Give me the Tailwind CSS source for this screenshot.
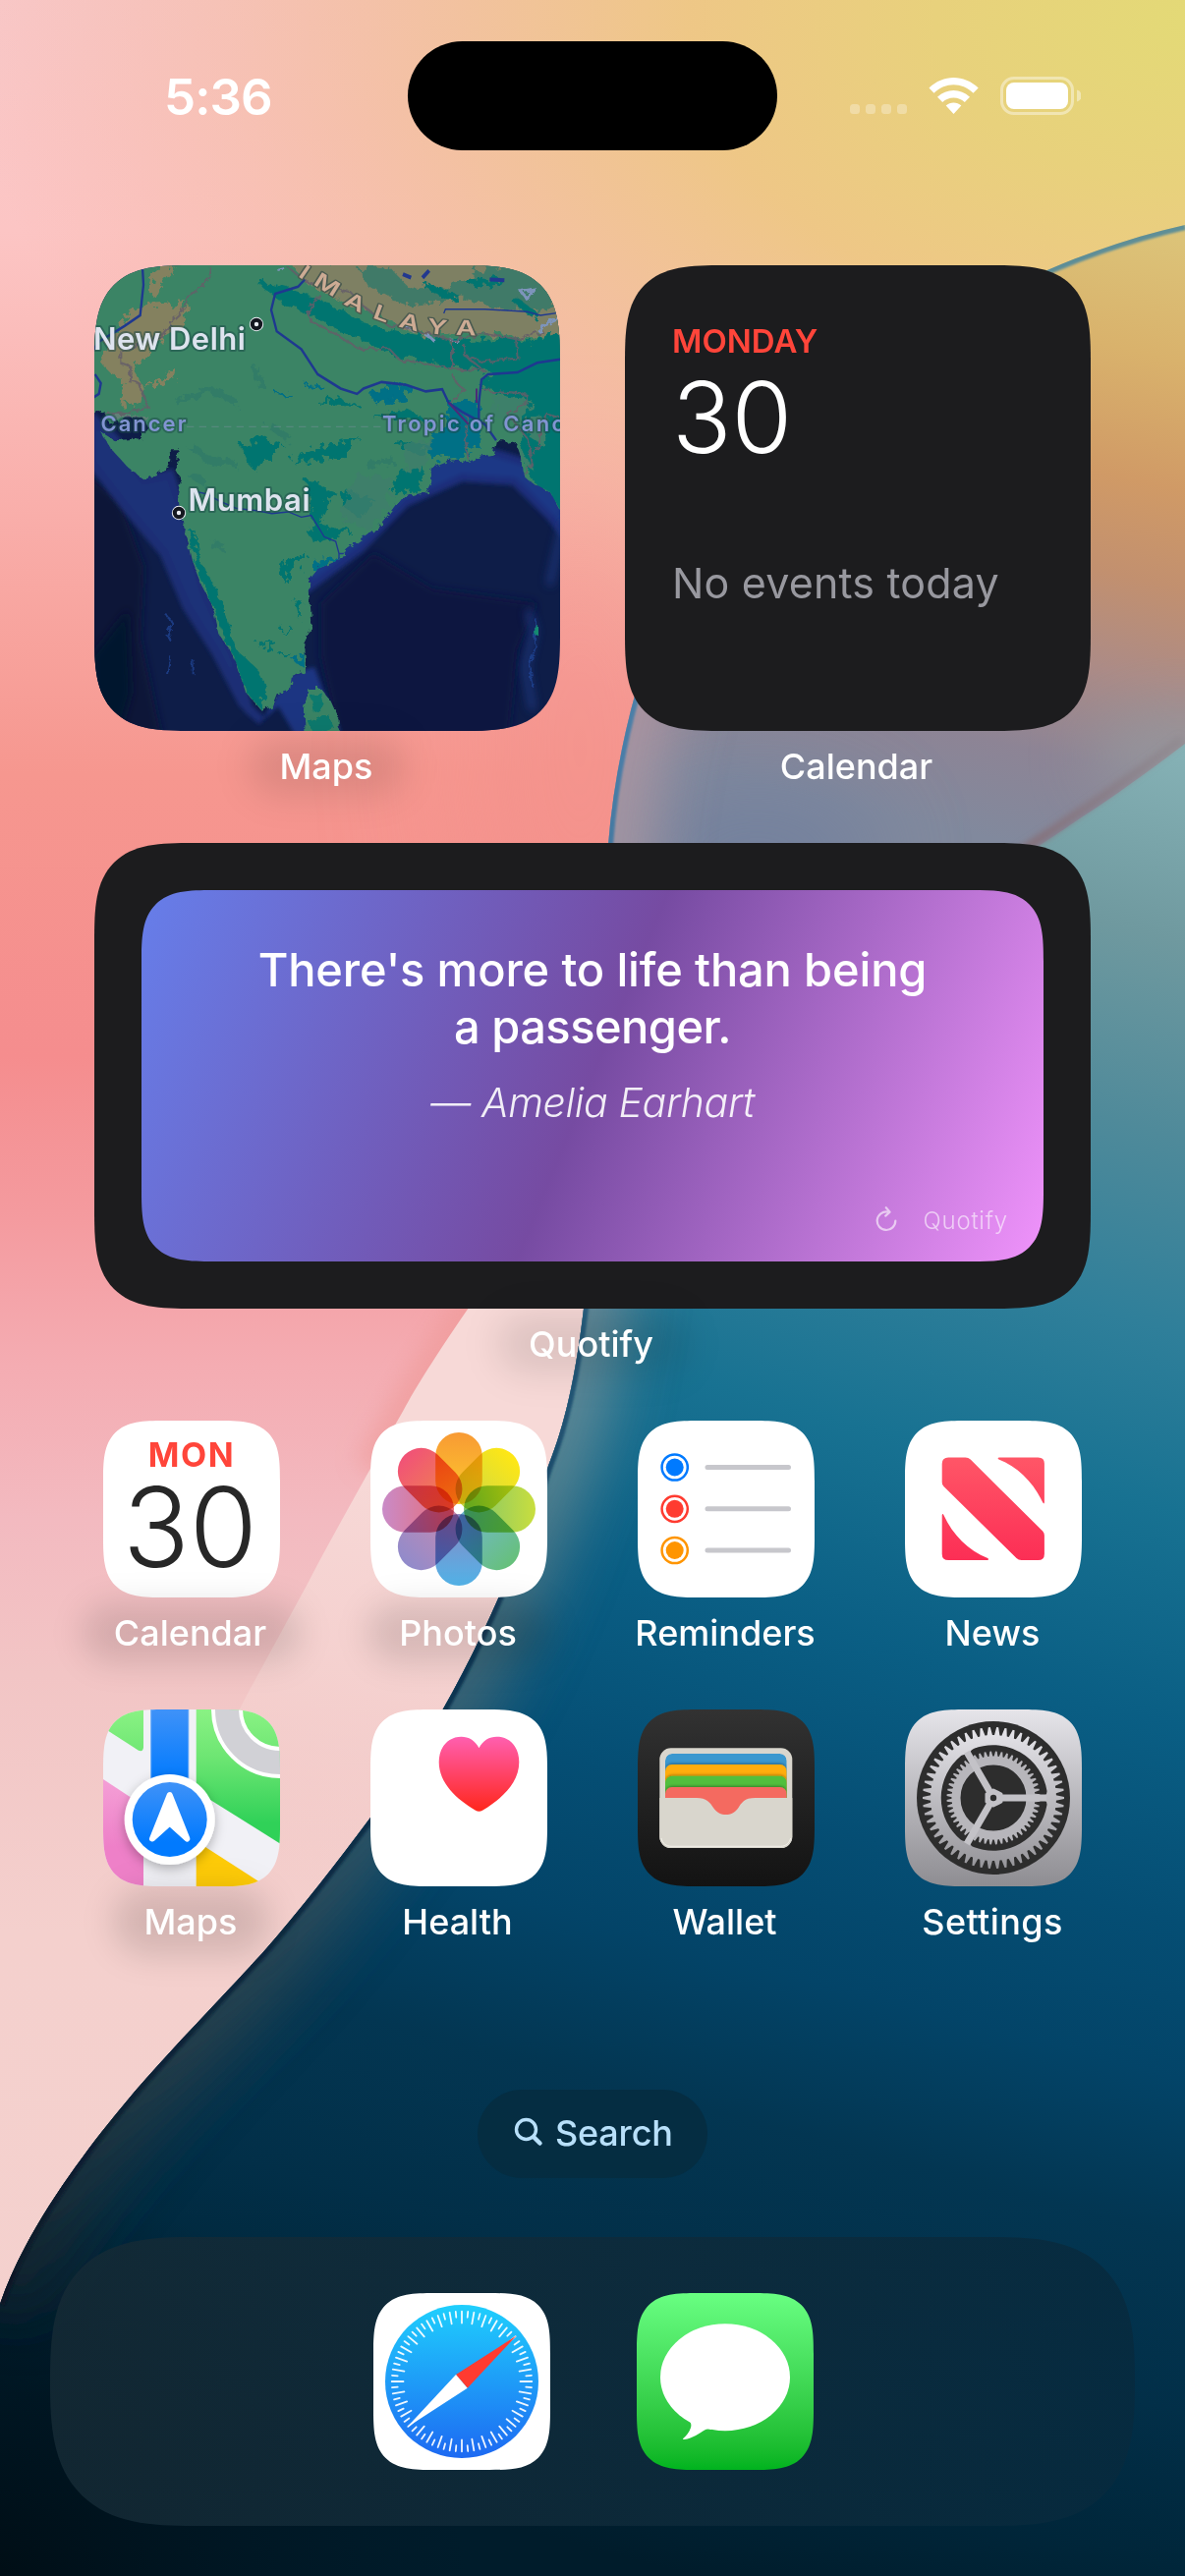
<!DOCTYPE html>
<html lang="en">
<head>
<meta charset="utf-8">
<title>Home Screen</title>
<script src="https://cdn.jsdelivr.net/npm/@tailwindcss/browser@4"></script>
</head>
<body class="bg-[#f4d1ce]">
<div class="relative h-[2622px] w-[1206px] overflow-hidden font-['Inter',sans-serif] text-white">

  <!-- Wallpaper -->
  <svg class="absolute inset-0 h-full w-full" viewBox="0 0 1206 2622">
    <defs>
      <linearGradient id="wBase" x1="0" y1="0" x2="0" y2="2622" gradientUnits="userSpaceOnUse">
        <stop offset="0" stop-color="#f8c8c8"/><stop offset=".09" stop-color="#fcc5c4"/><stop offset=".2" stop-color="#f9aeaa"/>
        <stop offset=".3" stop-color="#f6978f"/><stop offset=".41" stop-color="#f58d8e"/><stop offset=".47" stop-color="#f49a9e"/><stop offset=".53" stop-color="#f4acb2"/>
        <stop offset=".59" stop-color="#f3bac0"/><stop offset=".65" stop-color="#f2c5c5"/><stop offset=".75" stop-color="#f4d0cd"/><stop offset="1" stop-color="#f4d1ce"/>
      </linearGradient>
      <radialGradient id="wSun" cx="0" cy="0" r="1" gradientUnits="userSpaceOnUse" gradientTransform="matrix(1260 0 0 780 1230 20)">
        <stop offset="0" stop-color="#e3da76"/><stop offset=".22" stop-color="#e8d17c"/><stop offset=".42" stop-color="#eec785" stop-opacity=".98"/>
        <stop offset=".6" stop-color="#f1c197" stop-opacity=".85"/><stop offset=".8" stop-color="#f3b99c" stop-opacity=".4"/><stop offset="1" stop-color="#f5b0a0" stop-opacity="0"/>
      </radialGradient>
      <linearGradient id="wUpper" x1="1180" y1="230" x2="1040" y2="860" gradientUnits="userSpaceOnUse">
        <stop offset="0" stop-color="#dcc479"/><stop offset=".2" stop-color="#d9b26c"/><stop offset=".4" stop-color="#d09a66"/><stop offset=".55" stop-color="#c2906f"/>
        <stop offset=".7" stop-color="#ac8b86"/><stop offset=".85" stop-color="#8d8495"/><stop offset="1" stop-color="#81899d"/>
      </linearGradient>
      <linearGradient id="wDeep" x1="1206" y1="760" x2="706" y2="2622" gradientUnits="userSpaceOnUse">
        <stop offset="0" stop-color="#86b2b6"/><stop offset=".1" stop-color="#6f999f"/><stop offset=".2" stop-color="#4f8a9a"/><stop offset=".3" stop-color="#2f7f9a"/>
        <stop offset=".39" stop-color="#187292"/><stop offset=".5" stop-color="#0a5e84"/><stop offset=".6" stop-color="#054e74"/><stop offset=".68" stop-color="#034468"/>
        <stop offset=".76" stop-color="#033652"/><stop offset=".85" stop-color="#022f48"/><stop offset=".93" stop-color="#00263a"/><stop offset="1" stop-color="#001c2b"/>
      </linearGradient>
      <radialGradient id="wNight" cx="0" cy="0" r="1" gradientUnits="userSpaceOnUse" gradientTransform="matrix(520 0 0 420 -40 2640)">
        <stop offset="0" stop-color="#000b11" stop-opacity=".95"/><stop offset=".4" stop-color="#000f18" stop-opacity=".6"/><stop offset="1" stop-color="#001420" stop-opacity="0"/>
      </radialGradient>
      <linearGradient id="wEdge" x1="0" y1="229" x2="0" y2="2350" gradientUnits="userSpaceOnUse">
        <stop offset="0" stop-color="#5f8f96"/><stop offset=".25" stop-color="#4a7ea8"/><stop offset=".5" stop-color="#2c6485"/><stop offset=".7" stop-color="#0f3552"/><stop offset="1" stop-color="#081826"/>
      </linearGradient>
      <linearGradient id="wHaze" x1="0" y1="600" x2="0" y2="2350" gradientUnits="userSpaceOnUse">
        <stop offset="0" stop-color="#bd97a2"/><stop offset=".25" stop-color="#a39aa5"/><stop offset=".5" stop-color="#6d8e96"/><stop offset=".7" stop-color="#3c5a66"/><stop offset=".85" stop-color="#304149"/><stop offset="1" stop-color="#14222a"/>
      </linearGradient>
      <linearGradient id="wSeam" x1="1206" y1="757" x2="1060" y2="860" gradientUnits="userSpaceOnUse">
        <stop offset="0" stop-color="#8b8288" stop-opacity=".45"/><stop offset="1" stop-color="#85727c"/>
      </linearGradient>
      <linearGradient id="wRibbon" x1="330" y1="1480" x2="240" y2="1900" gradientUnits="userSpaceOnUse">
        <stop offset="0" stop-color="#f7d9d7"/><stop offset=".5" stop-color="#f5d2d0" stop-opacity=".9"/><stop offset="1" stop-color="#f4d1ce" stop-opacity="0"/>
      </linearGradient>
      <clipPath id="wSheet"><path d="M1206 229C1000 275 760 430 680 610C650 680 626 770 619 860C611 1010 611 1190 594 1332C586 1400 575 1450 558 1492C542 1540 526 1585 507 1627C475 1700 430 1785 377 1850C345 1893 305 1945 267 1988C210 2050 165 2095 127 2141C90 2185 25 2270 0 2345V2622H1206Z"/></clipPath>
      <clipPath id="wLower"><path d="M1206 757C1170 784 1135 810 1102 831C1060 860 1000 900 940 920L560 1100H0V2622H1206Z"/></clipPath>
      <clipPath id="wOutside"><path d="M0 0H1206V229C1000 275 760 430 680 610C650 680 626 770 619 860C611 1010 611 1190 594 1332C586 1400 575 1450 558 1492C542 1540 526 1585 507 1627C475 1700 430 1785 377 1850L0 2345Z"/></clipPath>
      <filter id="b12" x="-50%" y="-50%" width="200%" height="200%"><feGaussianBlur stdDeviation="12"/></filter>
      <filter id="b30" x="-50%" y="-50%" width="200%" height="200%"><feGaussianBlur stdDeviation="32"/></filter>
      <filter id="b45" x="-100%" y="-150%" width="300%" height="400%"><feGaussianBlur stdDeviation="45"/></filter>
      <filter id="b70" x="-100%" y="-100%" width="300%" height="300%"><feGaussianBlur stdDeviation="70"/></filter>
      <filter id="b1" x="-20%" y="-20%" width="140%" height="140%"><feGaussianBlur stdDeviation="1.2"/></filter>
      <filter id="b3" x="-20%" y="-20%" width="140%" height="140%"><feGaussianBlur stdDeviation="3"/></filter>
    </defs>
    <rect width="1206" height="2622" fill="url(#wBase)"/>
    <ellipse cx="590" cy="760" rx="120" ry="260" fill="#f3908a" opacity=".5" filter="url(#b70)"/>
    <rect width="1206" height="1000" fill="url(#wSun)"/>
    <g clip-path="url(#wOutside)">
      <path d="M520 1270C470 1340 440 1385 418 1422C404 1446 390 1470 376 1495" fill="none" stroke="#ef9a98" stroke-width="30" opacity=".7" filter="url(#b12)"/>
      <path d="M520 1270C470 1340 440 1385 418 1422C400 1455 345 1550 313 1612L253 1722L150 1920H700V1270Z" fill="url(#wRibbon)"/>
    </g>
    <g clip-path="url(#wSheet)">
      <rect width="1206" height="2622" fill="url(#wUpper)"/>
      <ellipse cx="770" cy="870" rx="130" ry="70" fill="#6f7f9e" opacity=".75" filter="url(#b45)"/>
      <ellipse cx="1200" cy="770" rx="90" ry="50" fill="#949ba0" opacity=".7" filter="url(#b30)"/>
      <g clip-path="url(#wLower)">
        <rect width="1206" height="2622" fill="url(#wDeep)"/>
        <rect y="2100" width="700" height="522" fill="url(#wNight)"/>
      </g>
      <path d="M1206 757C1170 784 1135 810 1102 831C1085 843 1060 860 1040 872" fill="none" stroke="url(#wSeam)" stroke-width="9" filter="url(#b3)" transform="translate(-3 -5)"/>
      <path d="M680 610C650 680 626 770 619 860C611 1010 611 1190 594 1332C586 1400 575 1450 558 1492C542 1540 526 1585 507 1627C475 1700 430 1785 377 1850C345 1893 305 1945 267 1988C210 2050 165 2095 127 2141C90 2185 25 2270 0 2345" fill="none" stroke="url(#wHaze)" stroke-width="80" opacity=".85" filter="url(#b30)"/>
      <path d="M1206 229C1000 275 760 430 680 610C650 680 626 770 619 860C611 1010 611 1190 594 1332C586 1400 575 1450 558 1492C542 1540 526 1585 507 1627C475 1700 430 1785 377 1850C345 1893 305 1945 267 1988C210 2050 165 2095 127 2141C90 2185 25 2270 0 2345" fill="none" stroke="url(#wEdge)" stroke-width="10" filter="url(#b1)"/>
    </g>
  </svg>

  <div class="relative flex flex-col">
    <!-- Status bar -->
    <header class="grid h-[194px] grid-cols-[415px_376px_415px] items-center">
      <div class="pt-[3px] pl-[167px] text-[51px] leading-[60px] font-semibold tracking-[-0.9px]">5:36</div>
      <div class="h-[111px] rounded-full bg-black"></div>
      <div class="flex items-center justify-end pr-[106px]">
        <svg class="h-[40px] w-[236px]" viewBox="864 77 236 40" fill="#fff">
          <g opacity=".3"><rect x="865" y="106" width="10" height="10" rx="3.5"/><rect x="881" y="106" width="10" height="10" rx="3.5"/><rect x="897" y="106" width="10" height="10" rx="3.5"/><rect x="913" y="106" width="10" height="10" rx="3.5"/></g>
          <path d="M945.5 89.500C960 75.500 981 75.500 995.700 89.500L990.500 94.700C978.500 83.500 962.500 83.500 950.500 94.700Z"/>
          <path d="M954 98.800C963.500 89.700 977.500 89.700 987 98.800L981.800 104C975.500 98 965.500 98 959.200 104Z"/>
          <path d="M962.700 107.500C967 103.500 974 103.500 978.300 107.500L970.500 116Z"/>
          <g opacity=".42"><rect x="1019.500" y="79.500" width="72" height="36" rx="12.500" fill="none" stroke="#fff" stroke-width="3"/><path d="M1096 91.500a6.200 6.200 0 0 1 0 12z"/></g>
          <rect x="1024" y="84" width="63" height="27" rx="8"/>
        </svg>
      </div>
    </header>

    <main class="flex flex-col gap-[56px] pt-[76px]">
      <div class="flex justify-between px-[96px]">
        <!-- Maps widget -->
        <section class="flex flex-col items-center gap-[14px]">
          <div class="size-[474px] overflow-hidden rounded-[101px] [corner-shape:superellipse(1.65)]">
            <svg class="block size-full" viewBox="0 0 474 474">
              <defs>
                <filter id="rough" x="-5%" y="-5%" width="110%" height="110%"><feTurbulence type="fractalNoise" baseFrequency=".05" numOctaves="3" seed="4"/><feDisplacementMap in="SourceGraphic" scale="22"/></filter>
                <filter id="rough2" x="-5%" y="-5%" width="110%" height="110%"><feTurbulence type="fractalNoise" baseFrequency=".04" numOctaves="3" seed="9"/><feDisplacementMap in="SourceGraphic" scale="50"/></filter>
                <filter id="mb" x="-60%" y="-30%" width="220%" height="160%"><feGaussianBlur stdDeviation="13"/></filter>
                <filter id="mb6" x="-60%" y="-30%" width="220%" height="160%"><feGaussianBlur stdDeviation="6"/></filter>
                <path id="land" d="M-60 0H1560V780L1470 740L1440 690L1370 655L1355 630L1350 590L1335 550L1310 555L1300 545H1275L1265 585L1230 590L1190 605L1140 600L1072 625L1078 660L1060 690L985 705L940 760L900 800L820 850L795 880L730 905L702 940L712 1060L688 1105L690 1190L650 1210L645 1245L605 1255L590 1290L560 1303L510 1250L475 1150L430 1090L410 1010L375 950L345 880L320 780L305 700L315 660L298 630L305 570H278L280 600L265 630L200 655L150 620L100 570L65 520L110 545L190 540L215 510L195 480L130 480L95 500L75 460L48 468L-60 480Z"/>
                <path id="isle" d="M700 1240H740L770 1275L797 1330V1400H692L690 1300Z"/>
                <clipPath id="landClip"><use href="#land"/></clipPath>
              </defs>
              <rect width="474" height="474" fill="#0e1d48"/>
              <g transform="scale(.33333 .36364) translate(-48 -55)">
                <path d="M740 1000L900 860L1080 960L1400 1000L1340 1130L1310 1400H800L740 1150Z" fill="#0b1341" filter="url(#mb)"/>
                <path d="M30 640L130 720L200 900L190 1100L260 1400H20Z" fill="#0a1438" filter="url(#mb)"/>
                <path d="M40 1150L150 1020L160 1250L120 1380H40Z" fill="#02142e" filter="url(#mb)"/>
                <path d="M40 480L110 540L200 655L280 640L330 780L380 960L480 1160L520 1300L560 1330L500 1280L420 1140L330 1010L260 860L150 740L40 610Z" fill="#1c3078" stroke="#1b2e74" stroke-width="26" filter="url(#mb6)"/>
                <path d="M700 960L860 850L1000 720L1170 650L1330 660L1440 760L1490 820L1480 640L1200 560L960 640L700 860Z" fill="#1f3786" stroke="#1b2f7a" stroke-width="22" filter="url(#mb6)"/>
                <path d="M640 1200L720 1180L745 1240L800 1360L680 1400L610 1290L560 1330Z" fill="#1f3582" filter="url(#mb6)"/>
                <path d="M1375 1030L1390 1080L1365 1180L1385 1290M1480 780L1440 940" fill="none" stroke="#1b3478" stroke-width="26" stroke-linecap="round" opacity=".8" filter="url(#mb)"/>
                <path d="M1393 1040L1396 1120L1375 1180L1390 1240M265 1030L290 1060L270 1090L285 1110M280 1150L270 1200M350 1160V1200" fill="none" stroke="#24489a" stroke-width="6" opacity=".7" filter="url(#rough)"/>
                <g filter="url(#rough)"><use href="#land" fill="#3b8465"/><use href="#isle" fill="#3b8465"/><path d="M1393 1062h8v28h-8z" fill="#138a70"/><path d="M710 1260L740 1250L750 1290L720 1310ZM700 1330L760 1310L780 1350L720 1370Z" fill="#0a7a6e"/></g>
                <g clip-path="url(#landClip)">
                  <g filter="url(#rough2)">
                    <path d="M230 60H300L250 110L240 150L215 130ZM190 170L330 160L320 220L250 260L210 300L160 340L200 400L290 340L300 370L200 400L190 440L130 450L140 380L90 350L60 320L130 210Z" fill="#84815f"/>
                    <path d="M640 40H1480V240L1380 260L1180 240L1040 250L930 200L820 160L700 110Z" fill="#7e8064"/>
                    <path d="M850 60H950L1000 110L1120 120L1250 60L1380 70L1450 120L1440 180L1300 180L1180 150L1000 170L880 110Z" fill="#417a68"/>
                    <path d="M540 100L640 120L740 150L800 180L880 220L980 240L1140 270L1300 260L1380 270L1490 230V760L1380 650L1350 560L1370 440L1230 400L1260 350L1130 340L980 310L850 260L740 210L620 160Z" fill="#04756f"/>
                    <path d="M1180 90L1230 110L1290 100M1160 150L1060 110M1330 150L1400 200" fill="none" stroke="#04756f" stroke-width="20"/>
                    <path d="M1130 440L1220 440L1230 560L1150 590L1080 600L1060 560L1120 500Z" fill="#056f86"/>
                    <path d="M890 410L1010 390L990 430L910 440ZM690 390L750 400M600 410L650 420" fill="#056f86" stroke="#056f86" stroke-width="8"/>
                    <path d="M1270 420L1380 430L1350 500L1270 480ZM1380 480L1430 480L1420 560L1370 530ZM1300 560L1350 570L1400 640Z" fill="#3d806a"/>
                    <path d="M500 560L560 540L620 560L570 600L530 620ZM650 600L760 560L850 540L800 590L720 600ZM700 660L780 690L740 770L700 800L720 830L830 800L720 780ZM800 690L900 710L860 760L810 730ZM960 550L1060 560L1050 590ZM980 640L1050 620L1040 680L960 690ZM730 440L800 430L860 450M900 480L1000 460L1080 500" fill="#04756f" stroke="#04756f" stroke-width="6"/>
                    <path d="M350 790L370 880L420 960L450 1040L480 1130L540 1180L570 1230L560 1300L510 1250L470 1150L410 1010L370 930L340 830Z" fill="#04756f"/>
                    <path d="M620 890L660 880L700 870L660 900L630 940ZM660 990L680 1000L670 1030ZM620 1080L650 1070M550 1120L600 1110M610 1140L640 1140" fill="#04756f" stroke="#04756f" stroke-width="8"/>
                    <path d="M720 880L800 870L780 890L720 920ZM650 1160L700 1140V1190Z" fill="#056f86"/>
                    <path d="M340 560L400 600L480 610M300 440L400 400L480 440M540 340L560 400M580 500L640 540M340 640L380 660M880 620L960 600M400 830L440 840" fill="none" stroke="#2f7a68" stroke-width="20" opacity=".8"/>
                    <path d="M990 560L1080 540L1060 610L1000 640ZM850 640L960 650L940 740L880 790L800 770Z" fill="#3e7d6b" opacity=".8"/>
                  </g>
                  <path d="M100 470L215 480L190 510L110 505Z" fill="#72807e" opacity=".7" filter="url(#rough)"/>
                  <path d="M1352 128L1388 122L1368 148ZM1402 240L1425 222L1462 205M990 225L1030 240M1060 250L1085 265M1135 265H1160M610 70L630 65" fill="none" stroke="#7d94bb" stroke-width="9" filter="url(#rough)"/>
                  <path d="M990 80L1015 90M1050 90L1070 70M1255 95L1300 97" stroke="#22388f" stroke-width="11"/>
                  <g fill="none" stroke="#655f69" stroke-width="6" opacity=".85" filter="url(#rough)">
                    <path d="M405 60L400 90L370 120L335 140L315 190L285 215L250 255L130 295V330L160 340L155 380L185 385L210 450L150 470L60 470"/>
                    <path d="M640 60L690 100L730 110L830 130L870 170L940 220L1040 240L1140 265L1240 245L1340 262L1420 240"/>
                    <path d="M740 140L705 170V210L770 240L850 285L950 290L980 320L1060 330L1140 345V270M1140 345L1240 350L1180 310L1175 275M1180 310L1240 325L1340 315L1335 260"/>
                    <path d="M1140 360L1160 390L1180 405L1130 440L1190 480L1180 540L1190 600M1235 405L1340 412L1370 420L1360 450L1310 470L1370 540L1385 610L1360 650M1385 580L1410 560V500L1430 470L1470 480"/>
                  </g>
                  <g fill="none" stroke="#1e3890" stroke-width="7">
                    <path d="M195 60L198 110L188 195L140 225L60 270L40 300M50 360L68 385L62 415L45 425"/>
                    <path d="M690 95L670 115L600 135L588 180L605 240L680 290L730 360L800 400L850 415L870 400L925 382L1000 390L1060 408L1110 402L1130 440L1170 465L1240 500L1275 545"/>
                    <path d="M1470 318L1400 328L1340 355L1250 360L1230 375L1222 440V490"/>
                    <path d="M1115 190L1120 178L1240 178L1370 185L1410 195L1465 188" stroke-width="4"/>
                    <path d="M365 690L390 695L430 715L480 735L545 742L590 750L640 745L680 760L710 755L740 800L750 815L785 828L795 862H822M795 862V882" stroke-width="4"/>
                  </g>
                  <path d="M1130 440L1190 500M1215 400V440" stroke="#4d2a78" stroke-width="6" fill="none"/>
                </g>
                <path d="M330 507H930" stroke="#6f8f94" stroke-width="4" stroke-dasharray="22 16" opacity=".5"/>
              </g>
              <g font-family="Inter" font-weight="600" paint-order="stroke" stroke="#1b4a4a" stroke-opacity=".5" stroke-width="4" stroke-linejoin="round">
                <g fill="#dde3ee" font-size="31"><text x="-1" y="86" letter-spacing=".45">New Delhi</text><text x="95.500" y="250" letter-spacing=".6">Mumbai</text></g>
                <g fill="#8294d2" font-size="22"><text x="6.500" y="169" letter-spacing="2">Cancer</text><text x="293" y="169" letter-spacing="2.300">Tropic of Canc</text></g>
                <g fill="#cdab94" stroke="#4b5a50" stroke-opacity="1" stroke-width="2.500" font-size="21" text-anchor="middle">
                  <text transform="translate(210 13) rotate(34) scale(1.3 1)">I</text><text transform="translate(233 26) rotate(32) scale(1.35 1)">M</text><text transform="translate(262 44) rotate(28) scale(1.35 1)">A</text><text transform="translate(290 56) rotate(20) scale(1.35 1)">L</text><text transform="translate(319 65) rotate(15) scale(1.35 1)">A</text><text transform="translate(348 70) rotate(7) scale(1.35 1)">Y</text><text transform="translate(378 71) rotate(2) scale(1.35 1)">A</text>
                </g>
              </g>
              <g fill="#e9ecf2"><circle cx="165" cy="60" r="7.200"/><circle cx="86" cy="252" r="7.200"/></g>
              <g fill="none" stroke="#14171f" stroke-width="4"><circle cx="165" cy="60" r="4.200"/><circle cx="86" cy="252" r="4.200"/></g>
            </svg>
          </div>
          <p class="relative pr-[2px] text-[36px] leading-[44px] font-medium"><span class="absolute -inset-x-8 -inset-y-2 rounded-full bg-black/10 blur-[18px]"></span><span class="relative">Maps</span></p>
        </section>

        <!-- Calendar widget -->
        <section class="flex flex-col items-center gap-[14px]">
          <div class="flex size-[474px] flex-col rounded-[101px] bg-[#1c1c1e] pt-[57px] pl-[48px] [corner-shape:superellipse(1.65)]">
            <span class="text-[33px] leading-[40px] font-semibold text-[#ff453a]">MONDAY</span>
            <span class="mt-[8px] text-[100px] leading-[100px] font-light">30</span>
            <span class="mt-[92px] text-[43px] leading-[52px] tracking-[0.17px] text-[#98989f]">No events today</span>
          </div>
          <p class="pr-[3px] text-[36px] leading-[44px] font-medium">Calendar</p>
        </section>
      </div>

      <!-- Quote widget -->
      <section class="flex flex-col items-center gap-[14px] px-[96px]">
        <div class="h-[474px] w-full rounded-[101px] bg-[#1c1c1e] p-[48px] [corner-shape:superellipse(1.65)]">
          <div class="flex h-full flex-col items-center rounded-[73px] bg-[linear-gradient(112.4deg,#667eea,#764ba2_50%,#f093fb)] pt-[52px] [corner-shape:superellipse(1.65)]">
            <p class="w-[720px] text-center text-[47px] leading-[58px] font-medium tracking-[-0.15px]">There's more to life than being<br><span class="tracking-[-0.5px]">a passenger.</span></p>
            <p class="mt-[23px] text-[41px] leading-[50px] font-light tracking-[-0.35px] text-white/90 italic">— Amelia Earhart</p>
            <div class="mt-[81px] flex items-center gap-[26px] self-end pr-[36px] text-white/60">
              <svg class="mb-[4px] h-[26px] w-[22px]" viewBox="0 0 22 26" fill="none" stroke="currentColor" stroke-width="2.200" stroke-linecap="round" stroke-linejoin="round"><path d="M12.500 5.500A9.300 9.300 0 1 0 20.300 14.600M10.800 1.200L14.600 5.600L10.200 9.600"/></svg>
              <span class="text-[24px] leading-[30px] font-light tracking-[0.8px]">Quotify</span>
            </div>
          </div>
        </div>
        <p class="relative pr-[3px] text-[36px] leading-[44px] font-medium"><span class="absolute -inset-x-8 -inset-y-2 rounded-full bg-black/10 blur-[18px]"></span><span class="relative">Quotify</span></p>
      </section>

      <!-- Apps -->
      <nav class="grid grid-cols-[repeat(4,180px)] justify-between gap-y-[56px] px-[105px]">
        <a class="flex flex-col items-center gap-[14px]">
          <div class="flex size-[180px] flex-col items-center rounded-[62px] bg-white pt-[15px] [corner-shape:superellipse(1.65)]">
            <span class="text-[34px] leading-[40px] font-bold tracking-[1.5px] text-[#ff453a]">MON</span>
            <span class="mt-[3px] pr-[3px] text-[112px] leading-[100px] font-light text-[#272727]">30</span>
          </div>
          <span class="relative pr-[3px] text-[36px] leading-[44px] font-medium"><span class="absolute -inset-x-8 -inset-y-2 rounded-full bg-black/12 blur-[16px]"></span><span class="relative">Calendar</span></span>
        </a>
        <a class="flex flex-col items-center gap-[14px]">
          <svg class="size-[180px] rounded-[62px] bg-white [corner-shape:superellipse(1.65)]" viewBox="0 0 180 180">
            <defs>
              <linearGradient id="p0" x1="0" y1="0" x2="0" y2="1"><stop stop-color="#f89a34"/><stop offset="1" stop-color="#fdcd2c"/></linearGradient>
              <linearGradient id="p1" x1="0" y1="0" x2="0" y2="1"><stop stop-color="#ffe714"/><stop offset="1" stop-color="#c8d84a"/></linearGradient>
              <linearGradient id="p2" x1="0" y1="0" x2="0" y2="1"><stop stop-color="#c9de3e"/><stop offset="1" stop-color="#7cc46e"/></linearGradient>
              <linearGradient id="p3" x1="0" y1="0" x2="0" y2="1"><stop stop-color="#66c07a"/><stop offset="1" stop-color="#74b8d4"/></linearGradient>
              <linearGradient id="p4" x1="0" y1="0" x2="0" y2="1"><stop stop-color="#52b3e8"/><stop offset="1" stop-color="#8b86c2"/></linearGradient>
              <linearGradient id="p5" x1="0" y1="0" x2="0" y2="1"><stop stop-color="#918bcb"/><stop offset="1" stop-color="#c98ab0"/></linearGradient>
              <linearGradient id="p6" x1="0" y1="0" x2="0" y2="1"><stop stop-color="#c98bc8"/><stop offset="1" stop-color="#ea6a70"/></linearGradient>
              <linearGradient id="p7" x1="0" y1="0" x2="0" y2="1"><stop stop-color="#f15277"/><stop offset="1" stop-color="#ef8a4a"/></linearGradient>
            </defs>
            <g class="isolate">
              <g class="[&>rect]:mix-blend-multiply">
                <rect x="66.200" y="12" width="47.600" height="73" rx="23.800" fill="url(#p0)"/>
                <rect x="66.200" y="12" width="47.600" height="73" rx="23.800" fill="url(#p1)" transform="rotate(45 90 90)"/>
                <rect x="66.200" y="12" width="47.600" height="73" rx="23.800" fill="url(#p2)" transform="rotate(90 90 90)"/>
                <rect x="66.200" y="12" width="47.600" height="73" rx="23.800" fill="url(#p3)" transform="rotate(135 90 90)"/>
                <rect x="66.200" y="12" width="47.600" height="73" rx="23.800" fill="url(#p4)" transform="rotate(180 90 90)"/>
                <rect x="66.200" y="12" width="47.600" height="73" rx="23.800" fill="url(#p5)" transform="rotate(225 90 90)"/>
                <rect x="66.200" y="12" width="47.600" height="73" rx="23.800" fill="url(#p6)" transform="rotate(270 90 90)"/>
                <rect x="66.200" y="12" width="47.600" height="73" rx="23.800" fill="url(#p7)" transform="rotate(315 90 90)"/>
              </g>
              <circle cx="90" cy="90" r="5" fill="#fff"/>
            </g>
          </svg>
          <span class="relative pr-[2px] text-[36px] leading-[44px] font-medium"><span class="absolute -inset-x-8 -inset-y-2 rounded-full bg-black/12 blur-[16px]"></span><span class="relative">Photos</span></span>
        </a>
        <a class="flex flex-col items-center gap-[14px]">
          <svg class="size-[180px] rounded-[62px] bg-white [corner-shape:superellipse(1.65)]" viewBox="0 0 180 180">
            <g stroke="#c7c7cc" stroke-width="5" stroke-linecap="round"><path d="M71 47.500H153.500M71 89.800H153.500M71 132H153.500"/></g>
            <g fill="#007aff"><circle cx="37.700" cy="47.500" r="9"/><circle cx="37.700" cy="47.500" r="13.100" fill="none" stroke="#007aff" stroke-width="2.500"/></g>
            <g fill="#ff3b30"><circle cx="37.700" cy="89.800" r="9"/><circle cx="37.700" cy="89.800" r="13.100" fill="none" stroke="#ff3b30" stroke-width="2.500"/></g>
            <g fill="#ff9500"><circle cx="37.700" cy="132" r="9"/><circle cx="37.700" cy="132" r="13.100" fill="none" stroke="#ff9500" stroke-width="2.500"/></g>
          </svg>
          <span class="pr-[2px] text-[36px] leading-[44px] font-medium">Reminders</span>
        </a>
        <a class="flex flex-col items-center gap-[14px]">
          <svg class="size-[180px] rounded-[62px] bg-white [corner-shape:superellipse(1.65)]" viewBox="0 0 180 180">
            <defs><linearGradient id="nw" x1="0" y1="37" x2="0" y2="142" gradientUnits="userSpaceOnUse"><stop stop-color="#ff5667"/><stop offset="1" stop-color="#fc2e55"/></linearGradient></defs>
            <g fill="url(#nw)">
              <path d="M37.700 44Q37.700 37.500 44.200 37.500H61.500Q64.500 37.500 66.700 39.600L140.200 112.500Q141.900 114.200 141.900 116.700V135.700Q141.900 142 135.600 142H118.500Q115.500 142 113.500 140L39.500 67Q37.700 65.200 37.700 62.700Z"/>
              <path d="M96 37.500H135.500Q141.900 37.500 141.900 43.800V83.300Q141.500 85.500 140.200 83.300C131 63.500 115 47 95.500 39.600Q93.500 38 96 37.500Z"/>
              <path d="M83.700 142H44.200Q37.700 142 37.700 135.700V96.200Q38.200 94 39.500 96.200C48.600 116 64.600 132.500 84.200 139.900Q86.200 141.500 83.700 142Z"/>
            </g>
          </svg>
          <span class="pr-[2px] text-[36px] leading-[44px] font-medium">News</span>
        </a>

        <a class="flex flex-col items-center gap-[14px]">
          <svg class="size-[180px] overflow-hidden rounded-[62px] bg-[#f1f1f6] [corner-shape:superellipse(1.65)]" viewBox="0 0 180 180">
            <defs>
              <linearGradient id="mg" x1="0" y1="0" x2="0" y2="136" gradientUnits="userSpaceOnUse"><stop stop-color="#8af284"/><stop offset=".35" stop-color="#6ee673"/><stop offset=".85" stop-color="#30d158"/></linearGradient>
              <linearGradient id="mbl" x1="0" y1="0" x2="0" y2="1"><stop stop-color="#3f92f8"/><stop offset=".8" stop-color="#017afe"/></linearGradient>
              <linearGradient id="mp" x1="0" y1="71" x2="0" y2="140" gradientUnits="userSpaceOnUse"><stop stop-color="#f49fd6"/><stop offset="1" stop-color="#ee80c8"/></linearGradient>
              <filter id="ms" x="-30%" y="-30%" width="160%" height="170%"><feDropShadow dx="0" dy="4" stdDeviation="6" flood-color="#000" flood-opacity=".28"/></filter>
            </defs>
            <path d="M0 18.500L36 41.700Q41 43.500 41 38V0H0Z" fill="url(#mg)"/>
            <path d="M0 71L41 98V180H0Z" fill="url(#mp)"/>
            <path d="M94.700 0H180V136.500L94.700 83Z" fill="url(#mg)"/>
            <path d="M94.700 134L166 180H94.700Z" fill="#fecb08"/>
            <circle cx="180" cy="0" r="54" fill="none" stroke="#d1d1d6" stroke-width="26"/>
            <circle cx="180" cy="0" r="68" fill="none" stroke="#fff" stroke-width="4"/><circle cx="180" cy="0" r="40" fill="none" stroke="#fff" stroke-width="4"/>
            <path d="M48.500 0H87V90H48.500Z" fill="url(#mbl)"/><path d="M48.700 0V90M86.800 0V90" stroke="#74b0f8" stroke-width="1"/>
            <circle cx="67.700" cy="112" r="46" fill="#fff" filter="url(#ms)"/><circle cx="67.700" cy="112" r="38" fill="url(#mbl)"/>
            <path d="M67.700 87L50 131.500L67.700 115.500L85.400 131.500Z" fill="#fff" stroke="#fff" stroke-width="6" stroke-linejoin="round"/>
          </svg>
          <span class="relative pr-[2px] text-[36px] leading-[44px] font-medium"><span class="absolute -inset-x-8 -inset-y-3 rounded-full bg-black/13 blur-[16px]"></span><span class="relative">Maps</span></span>
        </a>
        <a class="flex flex-col items-center gap-[14px]">
          <svg class="size-[180px] rounded-[62px] bg-white [corner-shape:superellipse(1.65)]" viewBox="0 0 180 180">
            <defs><linearGradient id="hh" x1="0" y1="0" x2="0" y2="1"><stop stop-color="#ff5fb0"/><stop offset="1" stop-color="#ff271c"/></linearGradient></defs>
            <path fill="url(#hh)" d="M110.500 39.200C106.500 31.500 100 27.700 92.500 27.700C79 27.700 69.700 38.500 69.700 53.500C69.700 75 88 91.500 107 102.700Q110.500 104.700 114 102.700C133 91.500 151.300 75 151.300 53.500C151.300 38.500 142 27.700 128.500 27.700C121 27.700 114.500 31.500 110.500 39.200Z"/>
          </svg>
          <span class="pr-[3px] text-[36px] leading-[44px] font-medium">Health</span>
        </a>
        <a class="flex flex-col items-center gap-[14px]">
          <svg class="size-[180px] rounded-[62px] bg-linear-to-b from-[#323232] to-[#131313] [corner-shape:superellipse(1.65)]" viewBox="0 0 180 180">
            <defs>
              <clipPath id="wc"><rect x="28" y="45" width="123.700" height="62" rx="7"/></clipPath>
              <filter id="cs" x="-10%" y="-40%" width="120%" height="180%"><feDropShadow dx="0" dy="-1" stdDeviation="1.500" flood-color="#000" flood-opacity=".35"/></filter>
            </defs>
            <rect x="22.300" y="39.300" width="135" height="101.700" rx="11.500" fill="#d9d6cd"/>
            <g clip-path="url(#wc)">
              <rect x="28" y="45" width="123.700" height="60" rx="7" fill="#3b98cf"/>
              <rect x="28" y="56" width="123.700" height="60" rx="7" fill="#ffad08" filter="url(#cs)"/>
              <rect x="28" y="67.700" width="123.700" height="60" rx="7" fill="#51bf3d" filter="url(#cs)"/>
              <rect x="28" y="79" width="123.700" height="60" rx="7" fill="#f46b60" filter="url(#cs)"/>
            </g>
            <path d="M22.300 90H60C70 90 73.500 94.500 77 100C80.500 105.300 85 107 89.700 107C94.500 107 99 105.300 102.500 100C106 94.500 109.500 90 119.500 90H157.300V129.500A11.500 11.500 0 0 1 145.800 141H33.800A11.500 11.500 0 0 1 22.300 129.500Z" fill="#d9d6cd"/>
            <path d="M24 131C25 136 29 139.300 34 139.300H145.600C150.600 139.300 154.600 136 155.600 131" fill="none" stroke="#f3f1ea" stroke-width="1"/>
          </svg>
          <span class="pr-[3px] text-[36px] leading-[44px] font-medium">Wallet</span>
        </a>
        <a class="flex flex-col items-center gap-[14px]">
          <svg class="size-[180px] rounded-[62px] bg-linear-to-b from-[#e6e5ea] to-[#8e8d92] [corner-shape:superellipse(1.65)]" viewBox="0 0 180 180">
            <defs>
              <linearGradient id="sg" x1="0" y1="18" x2="0" y2="162" gradientUnits="userSpaceOnUse"><stop stop-color="#e6e5ea"/><stop offset="1" stop-color="#96959a"/></linearGradient>
            </defs>
            <circle cx="90" cy="90" r="78" fill="#2d2d2d"/>
            <g fill="url(#sg)"><path id="outerTeeth" d=""/><circle cx="90" cy="90" r="64"/></g>
            <g fill="#2d2d2d" stroke="#2d2d2d" stroke-width="12" stroke-linejoin="round">
              <path d="M100 96.500H138.500A49.500 49.500 0 0 1 72 134.500L90 103Z"/>
              <path d="M100 83.500H138.500A49.500 49.500 0 0 0 72 45.500L90 77Z"/>
              <path d="M80 90L60.500 52A49.500 49.500 0 0 0 60.500 128Z"/>
            </g>
            <circle cx="90" cy="90" r="40" fill="#2d2d2d"/>
            <g fill="#b7b6bb"><path id="innerTeeth" d=""/></g>
            <circle cx="90" cy="90" r="38" fill="none" stroke="#b7b6bb" stroke-width="9"/>
            <g stroke="#c3c2c7" stroke-width="7"><path d="M90 90H144"/><path d="M90 90L63 43.200"/><path d="M90 90L63 136.800"/></g>
            <path d="M98 86L90 82L83 86L83 94L90 98L98 94Z" fill="#c3c2c7" stroke="#c3c2c7" stroke-width="3" stroke-linejoin="round"/>
            <circle cx="90" cy="90" r="3.200" fill="#2d2d2d"/>
          </svg>
          <span class="pr-[2px] text-[36px] leading-[44px] font-medium tracking-[0.4px]">Settings</span>
        </a>
      </nav>
    </main>

    <!-- Search pill -->
    <div class="mt-[149px] flex h-[90px] w-[234px] items-center self-center rounded-full bg-[#062c40]/90 pl-[37px] text-[#b8e0fa]">
      <svg class="mb-[4px] size-[30px]" viewBox="0 0 30 30" fill="none" stroke="currentColor" stroke-linecap="round"><circle cx="12.500" cy="12.500" r="10" stroke-width="3.400"/><path d="M20.500 20.500L26.500 26.500" stroke-width="4.500"/></svg>
      <span class="mb-[2px] ml-[12px] text-[36px] leading-[44px] font-medium tracking-[-0.2px]">Search</span>
    </div>

    <!-- Dock -->
    <footer class="mt-[60px] ml-[51px] flex h-[294px] w-[1104px] items-center justify-center gap-[88px] rounded-[146px] bg-linear-to-r from-[#152a35]/85 to-[#072a3e]/85 pl-[2px] [corner-shape:superellipse(1.5)]">
      <svg class="size-[180px] rounded-[62px] bg-white [corner-shape:superellipse(1.65)]" viewBox="0 0 180 180">
        <defs><linearGradient id="sf" x1="0" y1="0" x2="0" y2="1"><stop stop-color="#1fcffd"/><stop offset="1" stop-color="#1d69f2"/></linearGradient></defs>
        <circle cx="90" cy="90" r="78" fill="url(#sf)"/>
        <path id="ticks" d="" stroke="#fff" stroke-width="1.800" stroke-linecap="round" opacity=".92"/>
        <path d="M145.700 43.300L84 83L95.700 96.700Z" fill="#ff3b30"/>
        <path d="M34 136.700L84 83L95.700 96.700Z" fill="#fff"/>
      </svg>
      <svg class="size-[180px] rounded-[62px] bg-linear-to-b from-[#68ff82] to-[#00b31e] [corner-shape:superellipse(1.65)]" viewBox="0 0 180 180">
        <ellipse cx="90" cy="85.700" rx="66" ry="54.500" fill="#fff"/>
        <path fill="#fff" d="M48 126C54 130 56.500 132.500 55 137C53.500 142 50 145.500 47.300 148C46.500 149 47.500 149.200 48.500 149C57 148 64 142.500 69.500 139.300C71 138.300 72.500 138.500 76 139L80 120Z"/>
      </svg>
    </footer>
  </div>
</div>
<script>
  // Radial parts of the Settings gears and the Safari compass
  const pt = (r, a) => (90 + r * Math.sin(a)).toFixed(2) + ' ' + (90 - r * Math.cos(a)).toFixed(2);
  const teeth = (n, base, tip, wb, wt) => {
    let d = '';
    for (let i = 0; i < n; i++) {
      const a = (i + .5) * 2 * Math.PI / n;
      d += 'M' + pt(base, a - wb / base) + 'L' + pt(tip, a - wt / tip) + 'L' + pt(tip, a + wt / tip) + 'L' + pt(base, a + wb / base) + 'Z';
    }
    return d;
  };
  document.getElementById('outerTeeth').setAttribute('d', teeth(54, 62.5, 72, 3, 1));
  document.getElementById('innerTeeth').setAttribute('d', teeth(52, 41.5, 47.5, 2.1, .8));
  let t = '';
  for (let i = 0; i < 72; i++) {
    const a = i * Math.PI / 36;
    t += 'M' + pt(i % 2 ? 65.5 : 59.500, a) + 'L' + pt(71.3, a);
  }
  document.getElementById('ticks').setAttribute('d', t);
</script>
</body>
</html>
